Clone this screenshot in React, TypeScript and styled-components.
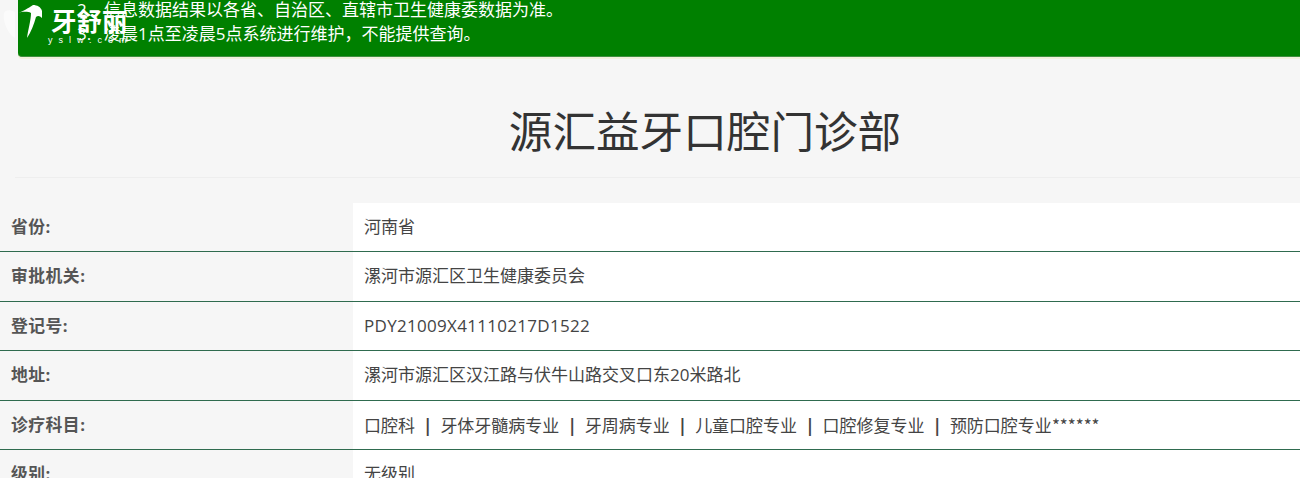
import React from "react";
import styled, { createGlobalStyle } from "styled-components";

const Global = createGlobalStyle`
  html, body { margin: 0; padding: 0; height: 478px; overflow: hidden; background: #f6f6f6; }
  body { font-family: "Open Sans", "Noto Sans CJK SC", sans-serif; color: #333; }
`;
const Page = styled.div`
  position: relative;
  width: 1300px;
  height: 478px;
  overflow: hidden;
`;
const Banner = styled.div`
  margin-left: 18px;
  margin-top: -3px;
  height: 60px;
  background: #008000;
  border-bottom: 1px solid #3f8f3f;
  border-radius: 0 0 0 4px;
  box-shadow: 0 2px 0 #f1f1dc;
  color: #fff;
  font-size: 17px;
  line-height: 24px;
  box-sizing: border-box;
  padding: 1px 0 0 59px;
`;
const BannerList = styled.ol`
  margin: 0;
  padding: 0;
  list-style: none;
`;
const BannerItem = styled.li`
  display: flex;
  gap: 13px;
  white-space: nowrap;
`;
const Num = styled.span`
  width: 14px;
`;
const Logo = styled.div`
  position: absolute;
  left: 0;
  top: 0;
  width: 134px;
  height: 50px;
  color: #fff;
`;
const LogoName = styled.div`
  position: absolute;
  left: 51px;
  top: 4px;
  font-family: "Noto Sans CJK SC", sans-serif;
  font-weight: 700;
  font-size: 25.5px;
  line-height: 32px;
  white-space: nowrap;
`;
const LogoSub = styled.div`
  position: absolute;
  left: 48px;
  top: 34px;
  font-family: "Liberation Sans", sans-serif;
  font-size: 9px;
  letter-spacing: 6px;
  line-height: 12px;
  white-space: nowrap;
`;
const LogoMark = styled.svg`
  position: absolute;
  left: 0;
  top: 0;
`;
const TitleWrap = styled.div`
  margin: 0 0 25px 15px;
  height: 120px;
  border-bottom: 1px solid #eee;
  display: flex;
  justify-content: center;
  align-items: center;
`;
const Title = styled.h1`
  margin: 28px 0 0 95px;
  font-weight: 400;
  font-size: 43.6px;
  line-height: 60px;
  color: #333;
`;
const Row = styled.div<{ $first?: boolean }>`
  display: grid;
  grid-template-columns: 353px 1fr;
  height: ${(p) => (p.$first ? "49px" : "49.6px")};
  box-sizing: border-box;
  border-bottom: 1.5px solid #2f6b4f;
`;
const Label = styled.div`
  padding-left: 11px;
  font-weight: 700;
  font-size: 16.8px;
  letter-spacing: 0.5px;
  line-height: 47px;
  color: #555;
`;
const Value = styled.div`
  background: #fff;
  padding-left: 11px;
  font-size: 17px;
  line-height: 47px;
  color: #444;
  white-space: nowrap;
`;
const Code = styled.span`
  letter-spacing: 0.3px;
`;
const Stars = styled.span`
  font-family: "Noto Sans CJK SC", sans-serif;
`;
const Sep = styled.span`
  margin: 0 8px;
  font-weight: 700;
`;

const rows: [string, React.ReactNode][] = [
  ["省份:", "河南省"],
  ["审批机关:", "漯河市源汇区卫生健康委员会"],
  ["登记号:", <Code>PDY21009X41110217D1522</Code>],
  ["地址:", "漯河市源汇区汉江路与伏牛山路交叉口东20米路北"],
];
const depts = ["口腔科", "牙体牙髓病专业", "牙周病专业", "儿童口腔专业", "口腔修复专业", "预防口腔专业"];

export default function App() {
  return (
    <Page>
      <Global />
      <Banner>
        <BannerList>
          <BannerItem><Num>2.</Num><span>信息数据结果以各省、自治区、直辖市卫生健康委数据为准。</span></BannerItem>
          <BannerItem><Num>3.</Num><span>{"凌晨1点至凌晨5点系统进行维护\uFF0C不能提供查询。"}</span></BannerItem>
        </BannerList>
      </Banner>
      <Logo>
        <LogoMark width="50" height="44" viewBox="0 0 50 44">
          <path d="M4 13 C5 10 9 9 15 12 L15 38 C11 36 7 30 5 24 C4 20 3 16 4 13 Z" fill="#fff" opacity=".55" />
          <path d="M17 13 C23 12 28 8 33 5 C37 5 41 7 42 11 L42 18 C40 16 38 15 36 17 C34 24 31 32 27 38 C28 30 31 20 31 13 C27 11 22 12 17 13 Z" fill="#fff" />
        </LogoMark>
        <LogoName>牙舒丽</LogoName>
        <LogoSub>yslw.com</LogoSub>
      </Logo>
      <TitleWrap><Title>源汇益牙口腔门诊部</Title></TitleWrap>
      {rows.map(([k, v], i) => (
        <Row key={k} $first={i === 0}><Label>{k}</Label><Value>{v}</Value></Row>
      ))}
      <Row>
        <Label>诊疗科目:</Label>
        <Value>
          {depts.map((d, i) => (
            <React.Fragment key={d}>{i > 0 && <Sep>|</Sep>}{d}</React.Fragment>
          ))}
          <Stars>******</Stars>
        </Value>
      </Row>
      <Row><Label>级别:</Label><Value>无级别</Value></Row>
    </Page>
  );
}
